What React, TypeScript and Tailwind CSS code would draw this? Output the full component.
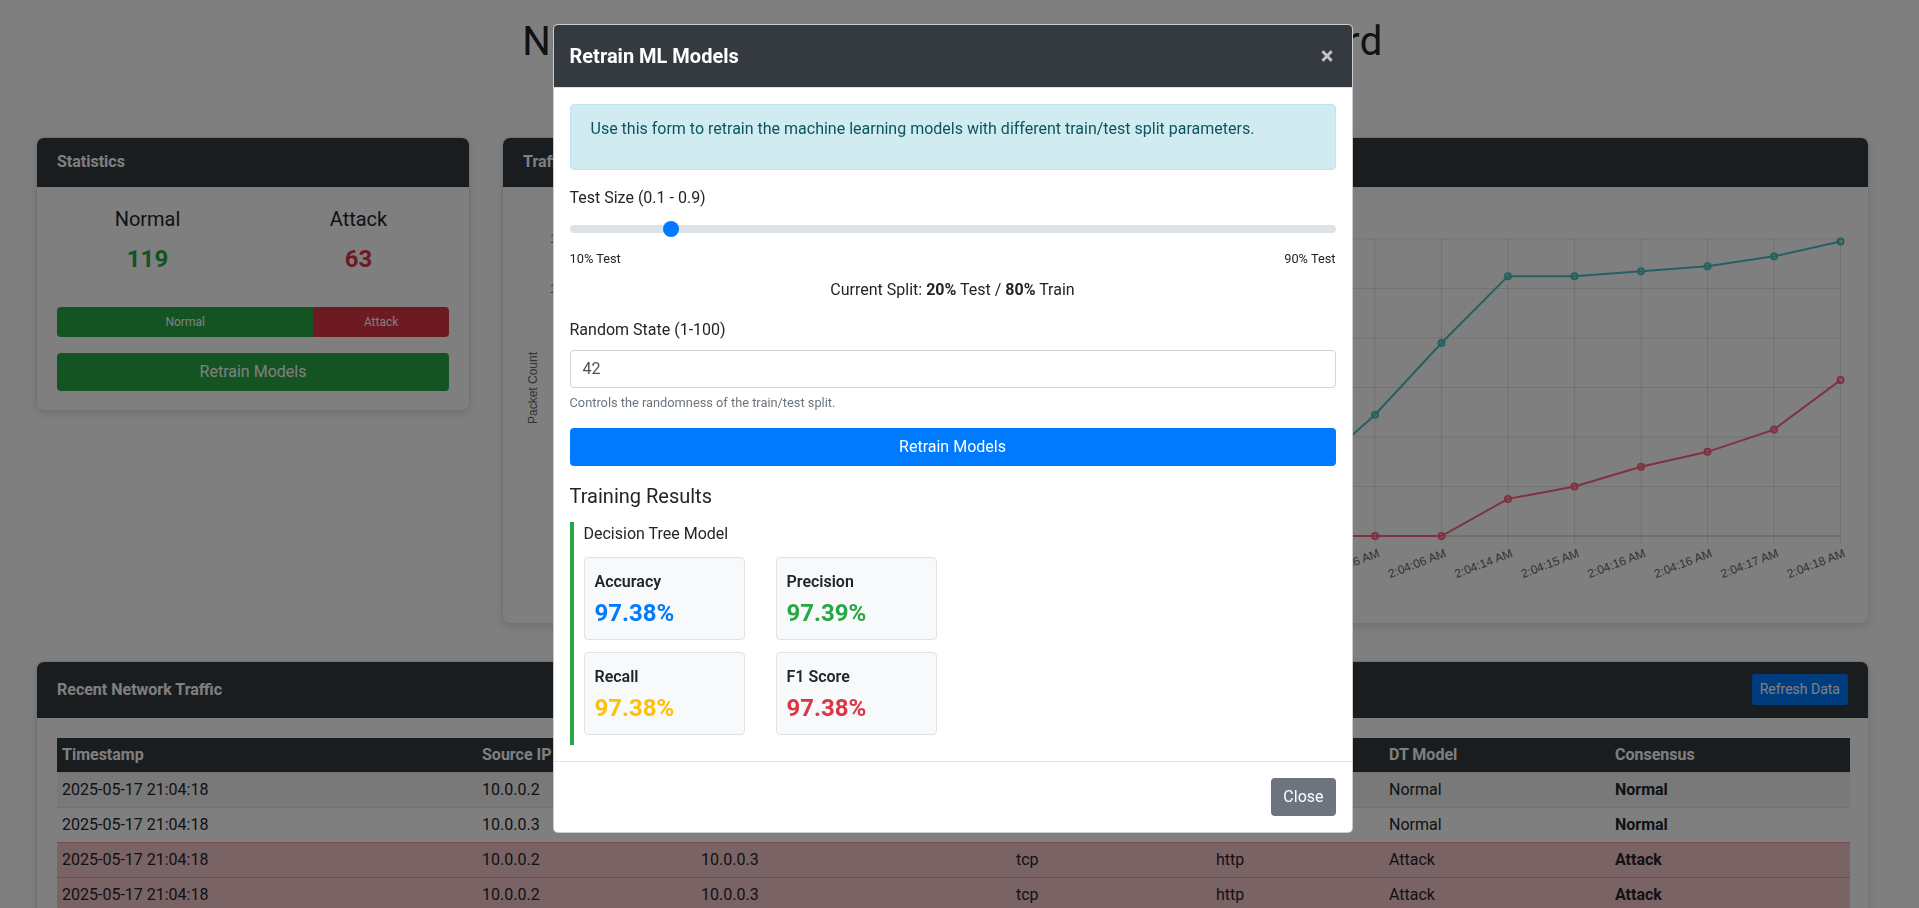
import React from 'react';

const normalData = [3, 5, 6, 8, 10, 12, 13, 15, 17, 19, 22, 25, 49, 78, 105, 105, 107, 109, 113, 119];
const attackData = [0, 0, 0, 0, 0, 0, 0, 0, 0, 0, 0, 0, 0, 0, 15, 20, 28, 34, 43, 63];
const times = [
  '', '2:02:46 AM', '2:02:51 AM', '2:02:56 AM', '2:03:01 AM', '2:03:06 AM', '2:03:11 AM',
  '2:03:16 AM', '2:03:21 AM', '2:03:26 AM', '2:03:31 AM', '2:03:36 AM', '2:03:56 AM', '2:04:06 AM',
  '2:04:14 AM', '2:04:15 AM', '2:04:16 AM', '2:04:16 AM', '2:04:17 AM', '2:04:18 AM',
];

const rows = [
  { ts: '2025-05-17 21:04:18', src: '10.0.0.2', dst: '10.0.0.3', proto: 'tcp', svc: 'http', dt: 'Normal', cons: 'Normal', attack: false },
  { ts: '2025-05-17 21:04:18', src: '10.0.0.3', dst: '10.0.0.2', proto: 'tcp', svc: 'http', dt: 'Normal', cons: 'Normal', attack: false },
  { ts: '2025-05-17 21:04:18', src: '10.0.0.2', dst: '10.0.0.3', proto: 'tcp', svc: 'http', dt: 'Attack', cons: 'Attack', attack: true },
  { ts: '2025-05-17 21:04:18', src: '10.0.0.2', dst: '10.0.0.3', proto: 'tcp', svc: 'http', dt: 'Attack', cons: 'Attack', attack: true },
  { ts: '2025-05-17 21:04:17', src: '10.0.0.3', dst: '10.0.0.2', proto: 'tcp', svc: 'http', dt: 'Normal', cons: 'Normal', attack: false },
];

// chart geometry, relative to the chart card body
const X0 = 74;
const DX = 66.5;
const YTOP = 52;
const YBOT = 349;
const yOf = (v: number) => YBOT - (v * (YBOT - YTOP)) / 120;

function TrafficChart() {
  const teal = 'rgb(75,192,192)';
  const red = 'rgb(255,99,132)';
  const line = (data: number[]) => data.map((v, i) => `${X0 + i * DX},${yOf(v)}`).join(' ');
  const lastX = X0 + 19 * DX;
  return (
    <svg width={1365} height={436} className="block" style={{ fontFamily: '"Liberation Sans", Arial, sans-serif' }}>
      {/* legend */}
      <rect x={560} y={14} width={40} height={12} fill="rgba(75,192,192,0.2)" stroke={teal} strokeWidth={3} />
      <text x={608} y={24} fontSize={12} fill="#666">Normal Traffic</text>
      <rect x={710} y={14} width={40} height={12} fill="rgba(255,99,132,0.2)" stroke={red} strokeWidth={3} />
      <text x={758} y={24} fontSize={12} fill="#666">Attack Traffic</text>

      {/* y grid */}
      {[0, 20, 40, 60, 80, 100, 120].map((v) => (
        <g key={v}>
          <line x1={X0 - 8} x2={lastX} y1={yOf(v)} y2={yOf(v)} stroke={v === 0 ? 'rgba(0,0,0,0.25)' : 'rgba(0,0,0,0.1)'} />
          <text x={X0 - 7} y={yOf(v) + 4} fontSize={12} fill="#666" textAnchor="end">{v}</text>
        </g>
      ))}
      {/* x grid */}
      {times.map((t, i) => {
        const x = X0 + i * DX;
        return (
          <g key={i}>
            <line x1={x} x2={x} y1={YTOP} y2={YBOT + 8} stroke={i === 0 ? 'rgba(0,0,0,0.25)' : 'rgba(0,0,0,0.1)'} />
            <text transform={`translate(${x + 2},${YBOT + 12}) rotate(-21)`} fontSize={12} fill="#666" textAnchor="end" dy={9}>{t}</text>
          </g>
        );
      })}
      <text transform={`translate(34,201) rotate(-90)`} fontSize={12} fill="#666" textAnchor="middle">Packet Count</text>

      <polyline points={line(normalData)} fill="none" stroke={teal} strokeWidth={2} />
      <polyline points={line(attackData)} fill="none" stroke={red} strokeWidth={2} />
      {normalData.map((v, i) => (
        <circle key={'n' + i} cx={X0 + i * DX} cy={yOf(v)} r={3} fill="rgba(75,192,192,0.2)" stroke={teal} strokeWidth={2} />
      ))}
      {attackData.map((v, i) => (
        <circle key={'a' + i} cx={X0 + i * DX} cy={yOf(v)} r={3} fill="rgba(255,99,132,0.2)" stroke={red} strokeWidth={2} />
      ))}
    </svg>
  );
}

function MetricBox({ label, value, color }: { label: string; value: string; color: string }) {
  return (
    <div className="w-[161px] h-[83px] bg-[#f8f9fa] border border-[#dee2e6] rounded-[4px] px-[10px] pt-[14px]">
      <div className="text-[16px] leading-[19px] font-semibold text-[#212529]">{label}</div>
      <div className={`mt-[8px] text-[24px] leading-[29px] font-bold ${color}`}>{value}</div>
    </div>
  );
}

export default function App() {
  return (
    <div className="relative min-h-screen bg-white text-[#212529] font-['Roboto','Noto_Sans',sans-serif] overflow-hidden h-[908px]">
      {/* page */}
      <div className="pl-[36px] pr-[50px] pt-[18px]">
        <h1 className="text-[40px] leading-[48px] font-normal tracking-[0.4px] text-center">Network Intrusion Detection System Dashboard</h1>

        <div className="mt-[71px] flex gap-[32px] items-start">
          <div className="w-[434px] bg-white border border-black/10 rounded-[8px] overflow-hidden shadow-[0_3px_10px_rgba(0,0,0,0.12)]">
            <div className="bg-[#343a40] text-white font-bold text-[16px] leading-6 px-[20px] py-[12px] border-b border-black/10">Statistics</div>
            <div className="px-[20px] pt-[20px] pb-[19px]">
              <div className="flex -mx-[15px]">
                <div className="flex-1 text-center">
                  <div className="text-[20px] leading-6">Normal</div>
                  <div className="mt-[14px] text-[24px] leading-[29px] font-bold text-[#28a745]">119</div>
                </div>
                <div className="flex-1 text-center">
                  <div className="text-[20px] leading-6">Attack</div>
                  <div className="mt-[14px] text-[24px] leading-[29px] font-bold text-[#dc3545]">63</div>
                </div>
              </div>
              <div className="mt-[33px] flex h-[30px] rounded-[4px] overflow-hidden text-[12px] text-white">
                <div className="w-[65.38%] bg-[#28a745] flex items-center justify-center">Normal</div>
                <div className="flex-1 bg-[#dc3545] flex items-center justify-center">Attack</div>
              </div>
              <button className="mt-[16px] w-full h-[38px] rounded-[4px] bg-[#28a745] text-white text-[16px]">Retrain Models</button>
            </div>
          </div>

          <div className="flex-1 bg-white border border-black/10 rounded-[8px] overflow-hidden shadow-[0_3px_10px_rgba(0,0,0,0.12)]">
            <div className="bg-[#343a40] text-white font-bold text-[16px] leading-6 px-[20px] py-[12px] border-b border-black/10">Traffic Over Time</div>
            <div className="h-[436px]">
              <TrafficChart />
            </div>
          </div>
        </div>

        <div className="mt-[37px] bg-white border border-black/10 rounded-[8px] overflow-hidden shadow-[0_3px_10px_rgba(0,0,0,0.12)]">
          <div className="bg-[#343a40] text-white px-[20px] py-[12px] border-b border-black/10 flex items-center justify-between">
            <span className="font-bold text-[16px] leading-6">Recent Network Traffic</span>
            <button className="h-[31px] px-[8px] rounded-[3px] bg-[#007bff] text-white text-[14px]">Refresh Data</button>
          </div>
          <div className="p-[20px]">
            <table className="w-full table-fixed border-collapse text-[16px] leading-6">
              <colgroup>
                <col className="w-[420px]" />
                <col className="w-[219px]" />
                <col className="w-[315px]" />
                <col className="w-[200px]" />
                <col className="w-[173px]" />
                <col className="w-[226px]" />
                <col className="w-[240px]" />
              </colgroup>
              <thead>
                <tr className="bg-[#343a40] text-white h-[34px]">
                  {['Timestamp', 'Source IP', 'Destination IP', 'Protocol', 'Service', 'DT Model', 'Consensus'].map((h) => (
                    <th key={h} className="text-left font-bold px-[5px] py-0">{h}</th>
                  ))}
                </tr>
              </thead>
              <tbody>
                {rows.map((r, i) => (
                  <tr
                    key={i}
                    className={
                      r.attack
                        ? 'bg-[#f5c6cb] border-t border-[#ed969e]'
                        : i % 2 === 0
                        ? 'bg-[#f2f2f2] border-t border-[#dee2e6]'
                        : 'bg-white border-t border-[#dee2e6]'
                    }
                  >
                    <td className="px-[5px] py-[5px]">{r.ts}</td>
                    <td className="px-[5px] py-[5px]">{r.src}</td>
                    <td className="px-[5px] py-[5px]">{r.dst}</td>
                    <td className="px-[5px] py-[5px]">{r.proto}</td>
                    <td className="px-[5px] py-[5px]">{r.svc}</td>
                    <td className="px-[5px] py-[5px]">{r.dt}</td>
                    <td className="px-[5px] py-[5px] font-bold">{r.cons}</td>
                  </tr>
                ))}
              </tbody>
            </table>
          </div>
        </div>
      </div>

      {/* backdrop */}
      <div className="fixed inset-0 bg-black/50" />

      {/* modal */}
      <div className="fixed inset-0 flex justify-center items-start pt-[24px] pr-[14px]">
        <div className="w-[800px] bg-white rounded-[5px] overflow-hidden border border-black/20">
          <div className="bg-[#343a40] text-white px-[16px] py-[16px] flex items-center justify-between border-b border-[#dee2e6]">
            <h5 className="text-[20px] leading-[30px] font-bold">Retrain ML Models</h5>
            <span className="text-[24px] leading-none font-bold text-white/70 mr-[2px]">×</span>
          </div>

          <div className="p-[16px]">
            <div className="bg-[#d1ecf1] border border-[#bee5eb] text-[#0c5460] rounded-[4px] px-[20px] pt-[12px] pb-[28px] text-[16px] leading-6">
              Use this form to retrain the machine learning models with different train/test split parameters.
            </div>

            <div className="mt-[16px]">
              <div className="text-[16px] leading-6">Test Size (0.1 - 0.9)</div>
              <div className="mt-[8px] h-[22px] flex items-center">
                <div className="relative w-full h-[8px] rounded-full bg-[#dee2e6]">
                  <div className="absolute top-1/2 -translate-y-1/2 left-[93px] w-[16px] h-[16px] rounded-full bg-[#007bff]" />
                </div>
              </div>
              <div className="mt-[9px] flex justify-between text-[12.8px] leading-[19px]">
                <span>10% Test</span>
                <span>90% Test</span>
              </div>
              <div className="mt-[10px] text-center text-[16px] leading-6">
                Current Split: <b>20%</b> Test / <b>80%</b> Train
              </div>
            </div>

            <div className="mt-[16px]">
              <div className="text-[16px] leading-6">Random State (1-100)</div>
              <div className="mt-[8px] h-[38px] border border-[#ced4da] rounded-[4px] px-[12px] flex items-center text-[16px] text-[#495057]">42</div>
              <div className="mt-[5px] text-[12.8px] leading-[19px] text-[#6c757d]">Controls the randomness of the train/test split.</div>
            </div>

            <button className="mt-[16px] w-full h-[38px] rounded-[4px] bg-[#007bff] text-white text-[16px]">Retrain Models</button>

            <div className="mt-[18px]">
              <h5 className="text-[20px] leading-6">Training Results</h5>
              <div className="mt-[14px] border-l-4 border-[#28a745] pl-[10px] pb-[10px]">
                <div className="text-[16px] leading-6">Decision Tree Model</div>
                <div className="mt-[11px] grid grid-cols-[161px_161px] gap-x-[31px] gap-y-[12px]">
                  <MetricBox label="Accuracy" value="97.38%" color="text-[#007bff]" />
                  <MetricBox label="Precision" value="97.39%" color="text-[#28a745]" />
                  <MetricBox label="Recall" value="97.38%" color="text-[#ffc107]" />
                  <MetricBox label="F1 Score" value="97.38%" color="text-[#dc3545]" />
                </div>
              </div>
            </div>
          </div>

          <div className="border-t border-[#dee2e6] px-[16px] py-[16px] flex justify-end">
            <button className="h-[38px] px-[12px] rounded-[4px] bg-[#6c757d] text-white text-[16px]">Close</button>
          </div>
        </div>
      </div>
    </div>
  );
}
